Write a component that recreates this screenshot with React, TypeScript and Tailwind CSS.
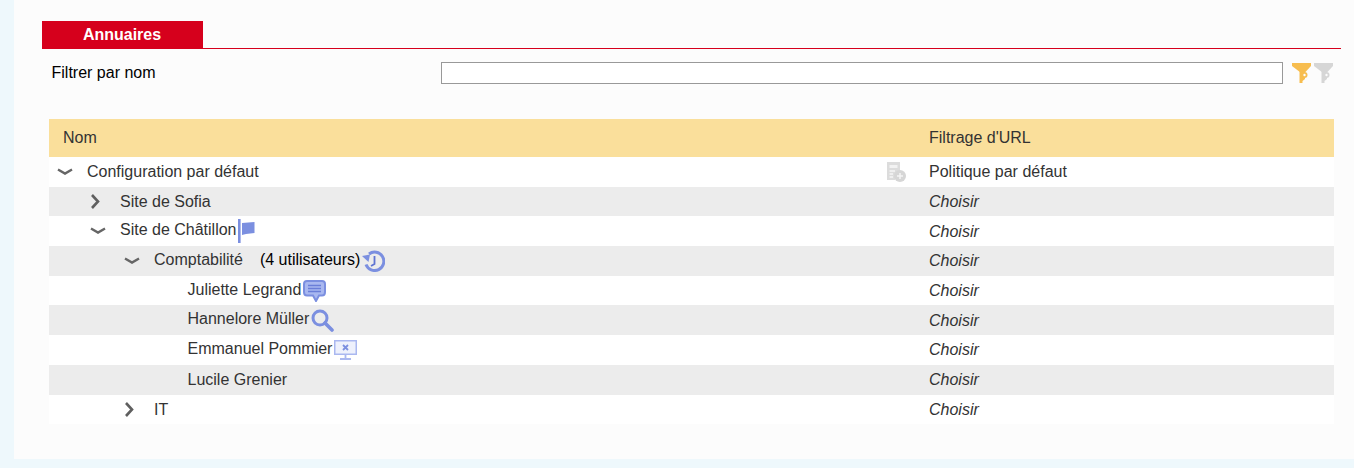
import { ReactNode } from "react";

const blue = "#7b8fe0";

function ChevronDown() {
    return (
        <svg width="16" height="8" viewBox="0 0 16 8" className="block">
            <path d="M1 1.5 L8 5.5 L15 1.5" fill="none" stroke="#666666" strokeWidth="2.4" />
        </svg>
    );
}

function ChevronRight() {
    return (
        <svg width="10" height="15" viewBox="0 0 10 15" className="block">
            <path d="M2 1 L8 7.5 L2 14" fill="none" stroke="#5f5f5f" strokeWidth="2.6" />
        </svg>
    );
}

function FlagIcon() {
    return (
        <svg width="17" height="24" viewBox="0 0 17 24" className="ml-[1px] block">
            <rect x="0" y="0" width="2.6" height="24" fill={blue} />
            <path d="M4 4 L16.5 3 L16.5 14 L8 15 L4 16 Z" fill={blue} />
        </svg>
    );
}

function HistoryIcon() {
    return (
        <svg width="23" height="22" viewBox="0 0 23 22" className="ml-[2px] block">
            <path d="M7 4 A9.2 9.2 0 1 1 4 14.5" fill="none" stroke={blue} strokeWidth="3" />
            <path d="M0 6 L8 4.5 L6.5 12 Z" fill={blue} />
            <path d="M12.5 6 L12.5 14 L9 16" fill="none" stroke="#5f74d2" strokeWidth="1.8" />
        </svg>
    );
}

function ChatIcon() {
    return (
        <svg width="23" height="22" viewBox="0 0 23 22" className="ml-[2px] block">
            <path
                d="M4 1 H19 Q22 1 22 4 V12 Q22 15.5 19 15.5 H16 L13 21 L10 15.5 H4 Q1 15.5 1 12 V4 Q1 1 4 1 Z"
                fill="#a9b8f0"
                stroke={blue}
                strokeWidth="2"
            />
            <path d="M5 5.5 H18 M5 8.5 H18 M5 11.5 H18" stroke="#6a7ed8" strokeWidth="1.3" />
        </svg>
    );
}

function SearchIcon() {
    return (
        <svg width="23" height="23" viewBox="0 0 23 23" className="ml-[2px] mt-[1px] block">
            <circle cx="9" cy="9" r="7" fill="none" stroke={blue} strokeWidth="3" />
            <path d="M14 14 L21 21" stroke={blue} strokeWidth="3.6" strokeLinecap="round" />
        </svg>
    );
}

function ScreenIcon() {
    return (
        <svg width="23" height="20" viewBox="0 0 23 20" className="ml-[2px] block">
            <rect x="0.75" y="0.75" width="21.5" height="13.5" fill="#eef1fc" stroke="#aab8f0" strokeWidth="1.5" />
            <path d="M9 5 L14 10 M14 5 L9 10" stroke={blue} strokeWidth="1.8" />
            <path d="M11.5 15 V18 M6 19 H17" stroke="#aab8f0" strokeWidth="1.8" />
        </svg>
    );
}

function FunnelIcon({ color }: { color: string }) {
    return (
        <svg width="19" height="20" viewBox="0 0 19 20" className="block">
            <path d="M0 0 H19 V3 L13 9.5 H8.5 L0 3 Z" fill={color} />
            <path d="M7.5 8 H13 V16 L10.5 18 V20 H7.5 Z" fill={color} />
            <circle cx="12.5" cy="12" r="3" fill={color} />
            <circle cx="12.5" cy="12" r="1.2" fill="#fcfcfc" />
        </svg>
    );
}

function DocPlusIcon() {
    return (
        <svg width="19" height="20" viewBox="0 0 19 20" className="block">
            <path d="M0 0 H13 V10 A7 7 0 0 0 8 18 H0 Z" fill="#dcdcdc" />
            <path d="M2.5 3 H10.5 V6 H2.5 Z" fill="#f2f2f2" />
            <path d="M2.5 9 H8 M2.5 12 H6 M2.5 15 H6" stroke="#f5f5f5" strokeWidth="1.4" />
            <circle cx="13" cy="14" r="6" fill="#d6d6d6" />
            <path d="M13 11 V17 M10 14 H16" stroke="#f5f5f5" strokeWidth="1.5" />
        </svg>
    );
}

type RowProps = {
    indent: string;
    toggle?: ReactNode;
    label: string;
    note?: string;
    icon?: ReactNode;
    shaded?: boolean;
    filter?: string;
    action?: ReactNode;
};

function Row({ indent, toggle, label, note, icon, shaded, filter, action }: RowProps) {
    return (
        <div className={`flex h-[29.7px] items-center ${shaded ? "bg-[#ececec]" : "bg-white"}`}>
            <div className={`flex w-[880px] shrink-0 items-center ${indent}`}>
                <span className="flex w-[38px] shrink-0 items-center pl-[7.5px]">{toggle}</span>
                {/* rows with an icon sit one pixel higher in the original */}
                <span className={`whitespace-nowrap text-[#333333] ${icon ? "pb-[2px]" : "pt-[0.8px]"}`}>
                    {label}
                    {note && <span className="ml-[17px] text-black">{note}</span>}
                </span>
                {icon}
                {action && <span className="ml-auto mr-[23px]">{action}</span>}
            </div>
            <span className={`pt-[0.8px] text-[#333333] ${filter ? "" : "italic"}`}>{filter ?? "Choisir"}</span>
        </div>
    );
}

export default function App() {
    return (
        <div className="h-[468px] overflow-hidden bg-[#eef8fc] pl-[14px] font-['Liberation_Sans',Arial,sans-serif] text-[16px]">
            <div className="h-[459px] bg-[#fcfcfc] pt-[21px] pl-[28px] pr-[13px]">
                <div className="border-b border-[#d6001c]">
                    <div className="flex h-[27px] w-[161px] items-center justify-center bg-[#d6001c] pr-[1px] font-bold text-white">
                        Annuaires
                    </div>
                </div>
                <div className="mt-[13px] flex h-[22px] items-center pl-[9.5px] text-black">
                    <span className="w-[389.5px] shrink-0">Filtrer par nom</span>
                    <input className="h-[22px] w-[842px] border border-[#999999] bg-white" />
                    <span className="ml-[9px] flex">
                        <FunnelIcon color="#f7bd4f" />
                        <span className="ml-[3px]">
                            <FunnelIcon color="#d6d6d6" />
                        </span>
                    </span>
                </div>
                <div className="mt-[35px] ml-[7px] w-[1285px]">
                    <div className="flex h-[38px] items-center bg-[#fadf9b] text-[#333333]">
                        <span className="w-[880px] shrink-0 pl-[14px]">Nom</span>
                        <span>Filtrage d'URL</span>
                    </div>
                    <Row
                        indent="pl-0"
                        toggle={<ChevronDown />}
                        label="Configuration par défaut"
                        filter="Politique par défaut"
                        action={<DocPlusIcon />}
                    />
                    <Row indent="pl-[33px]" toggle={<ChevronRight />} label="Site de Sofia" shaded />
                    <Row indent="pl-[33px]" toggle={<ChevronDown />} label="Site de Châtillon" icon={<FlagIcon />} />
                    <Row
                        indent="pl-[67px]"
                        toggle={<ChevronDown />}
                        label="Comptabilité"
                        note="(4 utilisateurs)"
                        shaded
                        icon={<HistoryIcon />}
                    />
                    <Row indent="pl-[100.5px]" label="Juliette Legrand" icon={<ChatIcon />} />
                    <Row indent="pl-[100.5px]" label="Hannelore Müller" shaded icon={<SearchIcon />} />
                    <Row indent="pl-[100.5px]" label="Emmanuel Pommier" icon={<ScreenIcon />} />
                    <Row indent="pl-[100.5px]" label="Lucile Grenier" shaded />
                    <Row indent="pl-[67px]" toggle={<ChevronRight />} label="IT" />
                </div>
            </div>
        </div>
    );
}
